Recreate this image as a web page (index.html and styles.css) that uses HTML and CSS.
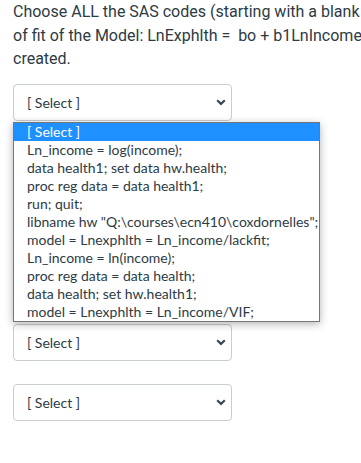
FILE: index.html
```html
<!DOCTYPE html>
<html>
<head>
    <meta charset="utf-8">
    <link rel="stylesheet" href="styles.css">
</head>
<body>
    <div class="question">
        <p class="questionText">Choose ALL the SAS codes (starting with a blank line) to check the lack<br>of fit of the Model: LnExphlth =&nbsp; bo + b1LnIncome + e. Assume the data set hw.health has been<br>created.</p>

        <div class="answers">
            <div class="selectWrap">
                <div class="selectBox">
                    <span>[ Select ]</span>
                    <svg class="chevron" width="10" height="7" viewBox="0 0 10 7"><path d="M1.2 1.2 L5 4.9 L8.8 1.2" fill="none" stroke="#394b58" stroke-width="2.2"/></svg>
                </div>
                <!-- open dropdown list of the first select -->
                <ul class="optionList">
                    <li class="selected">[ Select ]</li>
                    <li>Ln_income = log(income);</li>
                    <li>data health1; set data hw.health;</li>
                    <li>proc reg data = data health1;</li>
                    <li>run; quit;</li>
                    <li>libname hw "Q:\courses\ecn410\coxdornelles";</li>
                    <li>model = Lnexphlth = Ln_income/lackfit;</li>
                    <li>Ln_income = ln(income);</li>
                    <li>proc reg data = data health;</li>
                    <li>data health; set hw.health1;</li>
                    <li>model = Lnexphlth = Ln_income/VIF;</li>
                </ul>
            </div>
            <div class="selectBox">
                <span>[ Select ]</span>
                <svg class="chevron" width="10" height="7" viewBox="0 0 10 7"><path d="M1.2 1.2 L5 4.9 L8.8 1.2" fill="none" stroke="#394b58" stroke-width="2.2"/></svg>
            </div>
            <div class="selectBox">
                <span>[ Select ]</span>
                <svg class="chevron" width="10" height="7" viewBox="0 0 10 7"><path d="M1.2 1.2 L5 4.9 L8.8 1.2" fill="none" stroke="#394b58" stroke-width="2.2"/></svg>
            </div>
            <div class="selectBox">
                <span>[ Select ]</span>
                <svg class="chevron" width="10" height="7" viewBox="0 0 10 7"><path d="M1.2 1.2 L5 4.9 L8.8 1.2" fill="none" stroke="#394b58" stroke-width="2.2"/></svg>
            </div>
            <div class="selectBox">
                <span>[ Select ]</span>
                <svg class="chevron" width="10" height="7" viewBox="0 0 10 7"><path d="M1.2 1.2 L5 4.9 L8.8 1.2" fill="none" stroke="#394b58" stroke-width="2.2"/></svg>
            </div>
            <div class="selectBox">
                <span>[ Select ]</span>
                <svg class="chevron" width="10" height="7" viewBox="0 0 10 7"><path d="M1.2 1.2 L5 4.9 L8.8 1.2" fill="none" stroke="#394b58" stroke-width="2.2"/></svg>
            </div>
        </div>
    </div>
</body>
</html>
```
FILE: styles.css
```css
body {
    margin: 0;
    background-color: white;
    overflow: hidden;
}

.question {
    padding-left: 13px;
}

.questionText {
    margin: 0;
    white-space: nowrap;
    font-family: Roboto, sans-serif;
    font-size: 16px;
    line-height: 23.5px;
    color: #2d3b45;
}

.answers {
    display: flex;
    flex-direction: column;
    gap: 23px;
    margin-top: 13px;
}

.selectWrap {
    position: relative;
}

.selectBox {
    box-sizing: border-box;
    width: 219px;
    height: 37px;
    display: flex;
    align-items: center;
    justify-content: space-between;
    padding: 0 5px 0 13px;
    border: 1px solid #c7cdd1;
    border-radius: 4px;
    background-color: white;
    font-family: Lato, sans-serif;
    font-size: 14px;
    color: #2d3b45;
}

.optionList {
    position: absolute;
    top: 38px;
    left: 0;
    width: 307px;
    box-sizing: border-box;
    margin: 0;
    padding: 0;
    list-style: none;
    background-color: white;
    border: 1px solid #767676;
    box-shadow: 0 2px 8px rgba(0, 0, 0, 0.3);
    font-family: Lato, sans-serif;
    font-size: 14px;
    color: #2d3b45;
    z-index: 2;
}

.optionList li {
    height: 18px;
    line-height: 18px;
    padding-left: 13px;
    white-space: nowrap;
}

.optionList .selected {
    background-color: #1e90ff;
    color: white;
}
```
